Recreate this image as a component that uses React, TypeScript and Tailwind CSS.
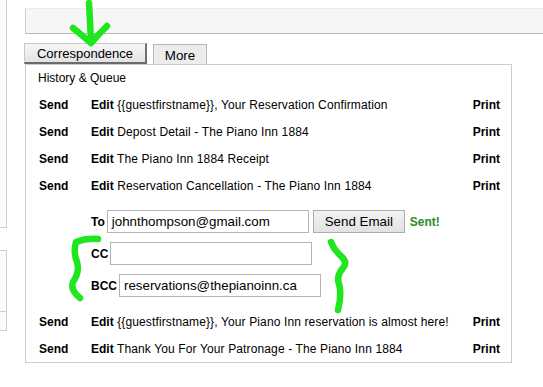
import React from "react";

const rowsTop = [
  "{{guestfirstname}}, Your Reservation Confirmation",
  "Depost Detail - The Piano Inn 1884",
  "The Piano Inn 1884 Receipt",
  "Reservation Cancellation - The Piano Inn 1884",
];
const rowsBottom = [
  "{{guestfirstname}}, Your Piano Inn reservation is almost here!",
  "Thank You For Your Patronage - The Piano Inn 1884",
];

function Row({ title }: { title: string }) {
  return (
    <div className="flex items-center h-[27px] pl-[13px] pr-[11px] text-[12px] text-black">
      <span className="w-[52px] font-bold">Send</span>
      <span className="flex-1 tracking-[0.13px]">
        <b className="tracking-normal">Edit</b> {title}
      </span>
      <span className="font-bold">Print</span>
    </div>
  );
}

function Field({ label, value }: { label: string; value: string }) {
  return (
    <div className="flex items-center gap-[2px]">
      <span className="text-[12px] font-bold">{label}</span>
      <div className="w-[202px] h-[23px] border border-[#b4b4b4] bg-white flex items-center pl-[4px] text-[13.33px] text-black">
        {value}
      </div>
    </div>
  );
}

export default function App() {
  return (
    <div
      className="relative w-[543px] h-[387px] overflow-hidden bg-white flex"
      style={{ fontFamily: '"Liberation Sans", Arial, sans-serif' }}
    >
      {/* left edge panels */}
      <div className="w-[7px] shrink-0 flex flex-col">
        <div className="h-[228px] border-r border-b border-[#cfcfcf] bg-[#fbfbfb]" />
        <div className="mt-[22px] h-[81px] border-t border-r border-b border-[#cfcfcf] bg-[#fbfbfb]">
          <div className="h-[61px] border-b border-[#cfcfcf]" />
        </div>
      </div>

      {/* main column */}
      <div className="ml-[17px] flex-1 flex flex-col">
        <div className="mt-[8px] ml-[1px] h-[26px] border-l border-t border-b border-t-[#ececec] border-l-[#cfcfcf] border-b-[#b9b9b9] bg-[#f6f6f6]" />

        <div className="mt-[9px] flex items-end h-[21px]">
          <div className="w-[123px] h-[21px] flex items-center justify-center text-[13px] text-black bg-gradient-to-b from-[#f6f6f6] to-[#e4e4e4] border-t border-l border-[#c8c8c8] border-r-2 border-b-2 border-r-[#707070] border-b-[#6a6a6a] pt-[1px]">
            Correspondence
          </div>
          <div className="ml-[6px] w-[54px] h-[20px] flex items-center justify-center text-[13.33px] text-black bg-[#ececec] border-t border-l border-r border-[#b5b5b5] pt-[2px]">
            More
          </div>
        </div>

        <div className="ml-[1px] w-[487px] border border-[#cccccc] bg-white flex flex-col">
          <div className="h-[26px] pl-[12px] flex items-center text-[12px] text-black">
            History &amp; Queue
          </div>
          {rowsTop.map((t) => (
            <Row key={t} title={t} />
          ))}

          <div className="mt-[11px] pl-[65px] flex flex-col gap-[9px]">
            <div className="flex items-center">
              <Field label="To" value="johnthompson@gmail.com" />
              <div className="ml-[4px] w-[92px] h-[23px] border border-[#adadad] bg-gradient-to-b from-[#f2f2f2] to-[#e2e2e2] flex items-center justify-center text-[13.33px] text-black">
                Send Email
              </div>
              <span className="ml-[5px] text-[12px] font-bold text-[#2b8a2b]">Sent!</span>
            </div>
            <Field label="CC" value="" />
            <Field label="BCC" value="reservations@thepianoinn.ca" />
          </div>

          <div className="mt-[11px]">
            {rowsBottom.map((t) => (
              <Row key={t} title={t} />
            ))}
          </div>
        </div>
      </div>

      {/* green hand-drawn annotations */}
      <svg
        className="absolute inset-0 pointer-events-none"
        width={543}
        height={387}
        viewBox="0 0 543 387"
      >
        <g
          fill="none"
          stroke="#1fe61f"
          strokeWidth={6.5}
          strokeLinecap="round"
          strokeLinejoin="round"
        >
          <path d="M89 3 Q90 20 91 42" />
          <path d="M73 28 Q83 36 91 43 Q99 34 107 26" />
          <path d="M98 239 Q86 238 76 242 Q73 252 77 262 Q80 272 73 282 Q70 290 80 298" />
          <path d="M331 242 Q334 250 341 256 Q348 262 343 268 Q336 276 339 284 Q342 294 338 310" />
        </g>
      </svg>
    </div>
  );
}
